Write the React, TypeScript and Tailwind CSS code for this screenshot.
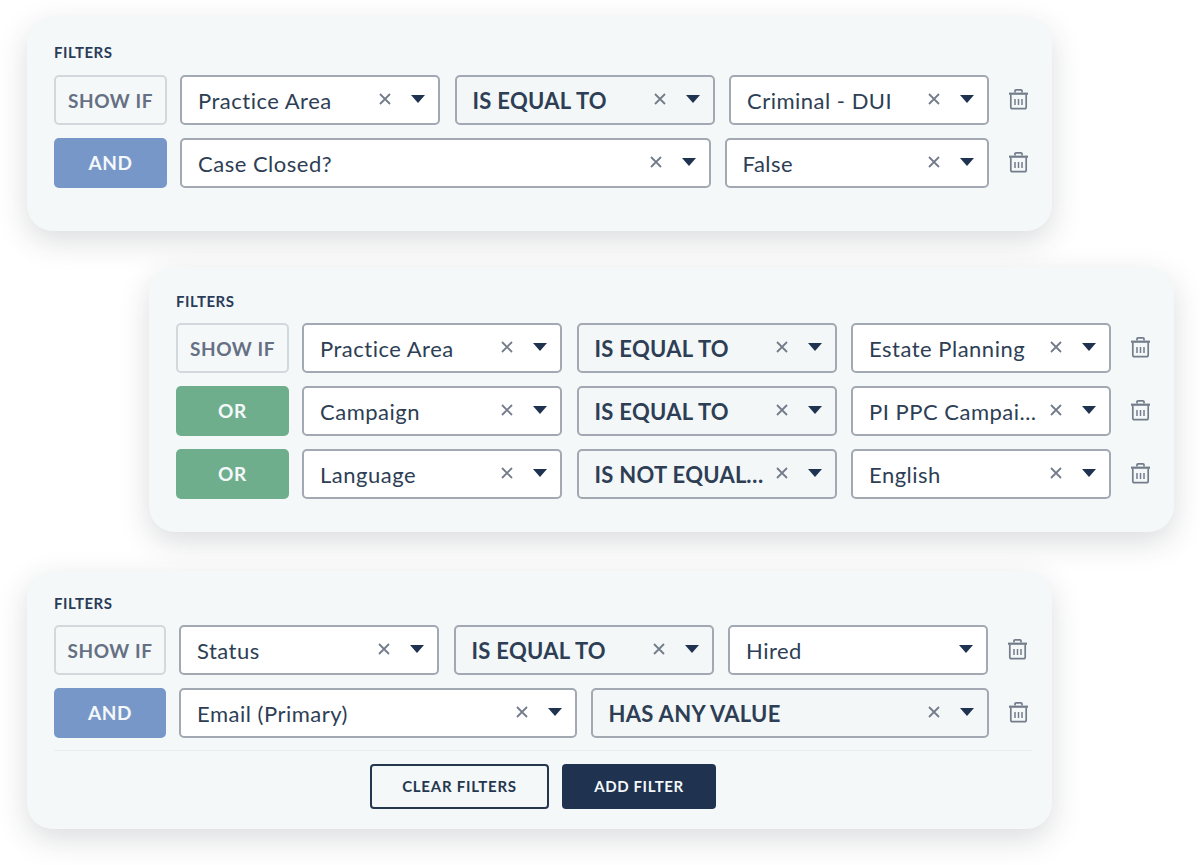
const font = "font-['Lato','Noto_Sans',sans-serif]";

type Field = { label: string; width: string; op?: boolean; noClear?: boolean };
type Row = { tag: "SHOW IF" | "AND" | "OR"; fields: Field[] };

function TrashIcon() {
  return (
    <svg width="21" height="22" viewBox="0 0 21 22" fill="none" stroke="#737c8a" strokeWidth="1.7" className="shrink-0">
      <path d="M1 5.7h19" strokeWidth="2.2" />
      <path d="M7 4.5V2.8c0-.6.4-1 1-1h5c.6 0 1 .4 1 1v1.7" />
      <path d="M2.8 6.5v12.4c0 1 .7 1.7 1.7 1.7h12c1 0 1.7-.7 1.7-1.7V6.5" />
      <path d="M7 11v6M10.5 11v6M14 11v6" strokeWidth="1.5" />
    </svg>
  );
}

function Select({ label, width, op, noClear }: Field) {
  return (
    <div
      className={`${width} h-[50px] shrink-0 flex items-center pl-[16px] pr-[13px] rounded-[5px] border-2 border-[#a3a9b2] ${
        op ? "bg-[#f3f7f8]" : "bg-white"
      }`}
    >
      <span
        className={`flex-1 min-w-0 truncate text-[#2d3e55] pt-[1px] ${
          op ? "font-bold text-[22px] tracking-[0.3px]" : "text-[22px] tracking-[0.5px]"
        }`}
      >
        {label}
      </span>
      {!noClear && (
        <svg width="12" height="12" viewBox="0 0 12 12" stroke="#737c8a" strokeWidth="1.8" className="shrink-0 -mt-[3px] ml-[8px]">
          <path d="M1 1l10 10M11 1L1 11" />
        </svg>
      )}
      <svg width="14" height="8" viewBox="0 0 14 8" fill="#1f3350" className="shrink-0 ml-[20px] -mt-[3px]">
        <path d="M0 0h14L7 8z" />
      </svg>
    </div>
  );
}

function Tag({ tag, width }: { tag: Row["tag"]; width: string }) {
  if (tag === "SHOW IF") {
    return (
      <div className={`${width} h-[50px] shrink-0 flex items-center justify-center rounded-[5px] border-2 border-[#d3d8dd] text-[#667084] font-bold text-[19px] tracking-[0.6px] pt-[2px]`}>
        SHOW IF
      </div>
    );
  }
  return (
    <div
      className={`${width} h-[50px] shrink-0 flex items-center justify-center rounded-[5px] text-[#f4f8fa] font-bold text-[19px] tracking-[0.6px] ${
        tag === "AND" ? "bg-[#7797c8]" : "bg-[#6fae8c]"
      }`}
    >
      {tag}
    </div>
  );
}

function FilterRow({ row, tagWidth }: { row: Row; tagWidth: string }) {
  return (
    <div className="flex items-center">
      <Tag tag={row.tag} width={tagWidth} />
      <div className="flex items-center gap-[14.5px] ml-[13px]">
        {row.fields.map((f) => (
          <Select key={f.label} {...f} />
        ))}
      </div>
      <div className="ml-[19px] -mt-[2px]">
        <TrashIcon />
      </div>
    </div>
  );
}

const first: Row[] = [
  {
    tag: "SHOW IF",
    fields: [
      { label: "Practice Area", width: "w-[260px]" },
      { label: "IS EQUAL TO", width: "w-[260px]", op: true },
      { label: "Criminal - DUI", width: "w-[260px]" },
    ],
  },
  {
    tag: "AND",
    fields: [
      { label: "Case Closed?", width: "w-[531px]" },
      { label: "False", width: "w-[264px] -ml-[1px]" },
    ],
  },
];

const second: Row[] = [
  {
    tag: "SHOW IF",
    fields: [
      { label: "Practice Area", width: "w-[260px]" },
      { label: "IS EQUAL TO", width: "w-[260px]", op: true },
      { label: "Estate Planning", width: "w-[260px]" },
    ],
  },
  {
    tag: "OR",
    fields: [
      { label: "Campaign", width: "w-[260px]" },
      { label: "IS EQUAL TO", width: "w-[260px]", op: true },
      { label: "PI PPC Campaign", width: "w-[260px]" },
    ],
  },
  {
    tag: "OR",
    fields: [
      { label: "Language", width: "w-[260px]" },
      { label: "IS NOT EQUAL TO", width: "w-[260px]", op: true },
      { label: "English", width: "w-[260px]" },
    ],
  },
];

const third: Row[] = [
  {
    tag: "SHOW IF",
    fields: [
      { label: "Status", width: "w-[260px]" },
      { label: "IS EQUAL TO", width: "w-[260px]", op: true },
      { label: "Hired", width: "w-[260px]", noClear: true },
    ],
  },
  {
    tag: "AND",
    fields: [
      { label: "Email (Primary)", width: "w-[398px]" },
      { label: "HAS ANY VALUE", width: "w-[398px] -ml-[1px]", op: true },
    ],
  },
];

function Card({
  rows,
  box,
  tagWidth,
  titleGap,
  children,
}: {
  rows: Row[];
  box: string;
  tagWidth: string;
  titleGap: string;
  children?: React.ReactNode;
}) {
  return (
    <div className={`${box} w-[1025px] rounded-[26px] bg-[#f4f8f9] pl-[27px] pr-[20px] shadow-[0_10px_30px_rgba(40,50,60,0.17)]`}>
      <div className={`${titleGap} text-[15px] leading-[16px] font-bold tracking-[0.5px] text-[#2a3c58]`}>FILTERS</div>
      <div className="flex flex-col gap-[13px]">
        {rows.map((r, i) => (
          <FilterRow key={i} row={r} tagWidth={tagWidth} />
        ))}
      </div>
      {children}
    </div>
  );
}

export default function App() {
  return (
    <div className={`${font} min-h-[865px] bg-white pt-[17px] flex flex-col`}>
      <Card rows={first} tagWidth="w-[113px]" titleGap="mb-[15px]" box="ml-[27px] pt-[27px] pb-[43px]" />
      <Card rows={second} tagWidth="w-[113px]" titleGap="mb-[14px]" box="ml-[149px] mt-[36px] pt-[26px] pb-[33px]" />
      <Card rows={third} tagWidth="w-[112px]" titleGap="mb-[14px]" box="ml-[27px] mt-[39px] pt-[24px] pb-[20px]">
        <div className="mt-[12px] pt-[13px] border-t border-[#e9edf0] flex justify-center gap-[13px]">
          <button className="w-[179px] h-[45px] rounded-[4px] border-2 border-[#24374f] text-[#24374f] font-bold text-[15px] tracking-[0.75px]">
            CLEAR FILTERS
          </button>
          <button className="w-[154px] h-[45px] rounded-[4px] bg-[#1f3350] text-[#f4f8fa] font-bold text-[15px] tracking-[0.6px]">
            ADD FILTER
          </button>
        </div>
      </Card>
    </div>
  );
}
